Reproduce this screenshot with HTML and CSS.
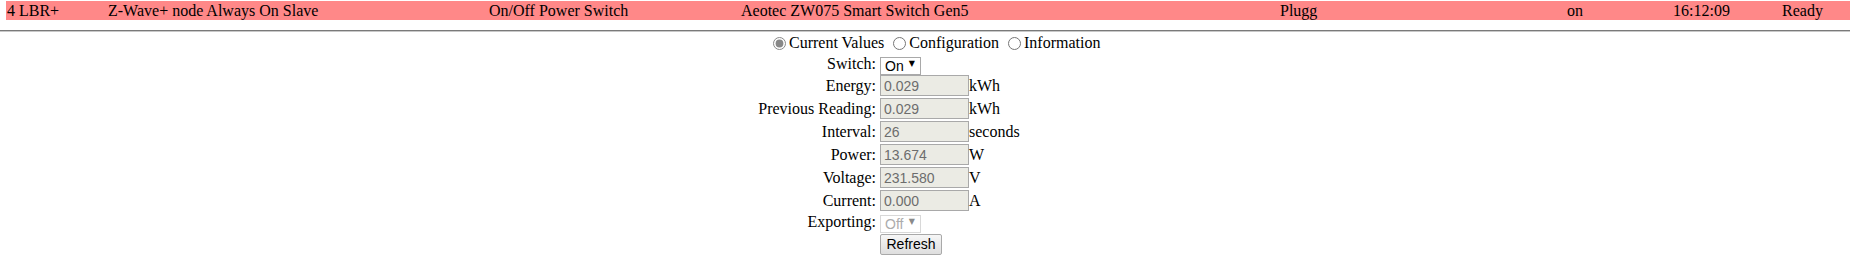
FILE: index.html
```html
<!DOCTYPE html>
<html lang="en">
<head>
    <meta charset="utf-8">
    <title>Node 4 - Plugg</title>
    <link rel="stylesheet" href="styles.css">
</head>
<body>
    <div class="node-row">
        <div>4 LBR+</div>
        <div>Z-Wave+ node Always On Slave</div>
        <div>On/Off Power Switch</div>
        <div>Aeotec ZW075 Smart Switch Gen5</div>
        <div>Plugg</div>
        <div>on</div>
        <div>16:12:09</div>
        <div>Ready</div>
    </div>
    <hr>

    <div class="tabs">
        <label><input type="radio" name="tab" checked> Current Values</label>
        <label><input type="radio" name="tab"> Configuration</label>
        <label><input type="radio" name="tab"> Information</label>
    </div>

    <div class="values">
        <span class="label short">Switch:</span>
        <span class="pick"><select><option>On</option><option>Off</option></select></span>
        <span></span>

        <span class="label">Energy:</span>
        <input type="text" value="0.029" disabled>
        <span class="unit">kWh</span>

        <span class="label">Previous Reading:</span>
        <input type="text" value="0.029" disabled>
        <span class="unit">kWh</span>

        <span class="label">Interval:</span>
        <input type="text" value="26" disabled>
        <span class="unit">seconds</span>

        <span class="label">Power:</span>
        <input type="text" value="13.674" disabled>
        <span class="unit">W</span>

        <span class="label">Voltage:</span>
        <input type="text" value="231.580" disabled>
        <span class="unit">V</span>

        <span class="label">Current:</span>
        <input type="text" value="0.000" disabled>
        <span class="unit">A</span>

        <span class="label short">Exporting:</span>
        <span class="pick off"><select disabled><option>Off</option></select></span>
        <span></span>

        <span></span>
        <span><button>Refresh</button></span>
        <span></span>
    </div>
</body>
</html>
```

FILE: styles.css
```css
body {
    margin: 0;
    font-family: "Liberation Serif", "Times New Roman", serif;
    font-size: 16px;
    color: #000;
}
.node-row {
    display: grid;
    grid-template-columns: 101px 381px 252px 539px 287px 106px 109px 1fr;
    margin: 1px 0 0 6px;
    height: 19px;
    line-height: 19px;
    background-color: #ff8888;
}
.node-row div {
    padding-left: 1px;
    white-space: nowrap;
}
hr {
    margin: 10px 0 0 0;
    border: 0;
    border-top: 1px solid #7a7a7a;
    border-bottom: 1px solid #c8c8c8;
    height: 0;
}
.tabs {
    display: flex;
    margin: 0 0 0 768px;
    height: 21px;
    line-height: 21px;
}
.tabs label {
    display: flex;
    align-items: center;
    margin-right: 4px;
}
.tabs input {
    width: 13px;
    height: 13px;
    margin: 1px 3px 0 5px;
    accent-color: #888;
}
.values {
    display: grid;
    grid-template-columns: 130px 89px auto;
    row-gap: 2px;
    margin: 2px 0 0 750px;
    line-height: 21px;
}
.label {
    text-align: right;
    padding-right: 4px;
    white-space: nowrap;
}
.label.short {
    line-height: 18px;
}
.values input {
    box-sizing: border-box;
    width: 89px;
    height: 21px;
    margin: 0;
    padding: 1px 3px;
    border: 1px solid #a9a9a9;
    border-radius: 0;
    background-color: #ebebe4;
    color: #6d6d6d;
    font-family: "Liberation Sans", Arial, sans-serif;
    font-size: 14px;
}
.pick {
    position: relative;
    display: inline-block;
    width: 41px;
    height: 18px;
}
.pick::after {
    content: "\25BC";
    position: absolute;
    right: 6px;
    top: 0;
    line-height: 18px;
    font-family: "DejaVu Sans", sans-serif;
    font-size: 8px;
    color: #000;
    pointer-events: none;
}
.pick select {
    appearance: none;
    box-sizing: border-box;
    width: 41px;
    height: 18px;
    margin: 0;
    padding: 0 0 0 4px;
    border: 1px solid #a9a9a9;
    border-radius: 0;
    background-color: #fff;
    color: #000;
    font-family: "Liberation Sans", Arial, sans-serif;
    font-size: 14px;
}
.pick.off::after {
    color: #8a8a8a;
}
.pick.off select {
    border-color: #c8c8c8;
    color: #8a8a8a;
}
button {
    box-sizing: border-box;
    width: 62px;
    height: 21px;
    margin: 0;
    padding: 0;
    border: 1px solid #a9a9a9;
    border-radius: 2px;
    background: linear-gradient(#f6f6f6, #dedede);
    color: #000;
    font-family: "Liberation Sans", Arial, sans-serif;
    font-size: 14px;
}
```
